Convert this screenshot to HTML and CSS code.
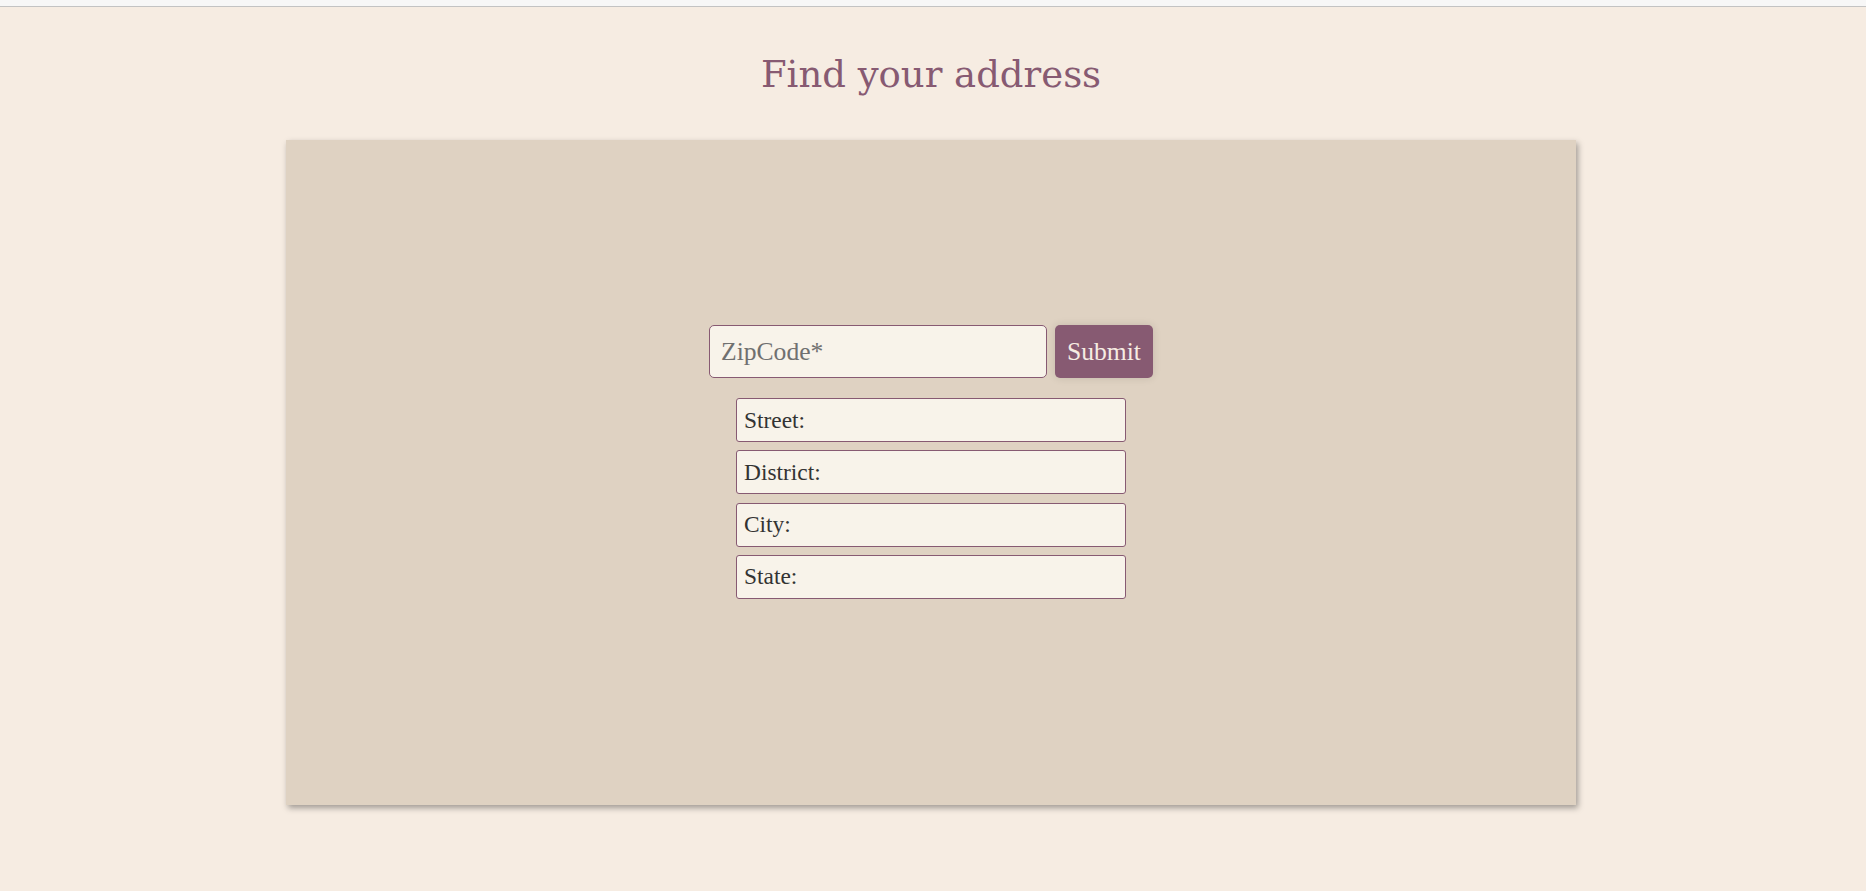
FILE: index.html
```html
<!DOCTYPE html>
<html lang="en">
<head>
<meta charset="utf-8">
<title>Find your address</title>
<link rel="stylesheet" href="styles.css">
</head>
<body>
<div class="topbar"></div>
<main class="page">
  <h1 class="title">Find your address</h1>
  <section class="card">
    <form class="zip-row" onsubmit="return false">
      <input class="zip-input" type="text" placeholder="ZipCode*">
      <button class="submit-btn" type="submit">Submit</button>
    </form>
    <div class="fields">
      <div class="field">Street:</div>
      <div class="field">District:</div>
      <div class="field">City:</div>
      <div class="field">State:</div>
    </div>
  </section>
</main>
</body>
</html>
```
FILE: styles.css
```css
html, body {
  margin: 0;
  padding: 0;
  background: #f6ece2;
}
body {
  font-family: "Liberation Serif", "Times New Roman", serif;
  min-height: 891px;
}
.topbar {
  height: 6px;
  background: #f7f7f7;
  border-bottom: 1px solid #c3c3c3;
}
.page {
  padding-right: 4px;
}
.title {
  margin: 0;
  padding-top: 46px;
  height: 133px;
  box-sizing: border-box;
  text-align: center;
  font-family: "DejaVu Serif", serif;
  font-weight: 400;
  font-size: 37px;
  line-height: 44px;
  color: #875a72;
}
.card {
  width: 1290px;
  height: 665px;
  box-sizing: border-box;
  margin: 0 auto;
  padding-top: 185px;
  background: #dfd2c2;
  box-shadow: 2px 3px 6px rgba(0, 0, 0, 0.35);
  display: flex;
  flex-direction: column;
  align-items: center;
}
.zip-row {
  display: flex;
  gap: 8px;
  margin: 0;
}
.zip-input {
  width: 338px;
  height: 53px;
  box-sizing: border-box;
  border: 1px solid #875a72;
  border-radius: 5px;
  background: #f8f3ea;
  padding: 0 11px;
  font-family: "Liberation Serif", serif;
  font-size: 25.6px;
  color: #333;
  outline: none;
}
.zip-input::placeholder {
  color: #707070;
}
.submit-btn {
  width: 98px;
  height: 53px;
  border: none;
  border-radius: 5px;
  background: #875a72;
  color: #f6ece2;
  font-family: "Liberation Serif", serif;
  font-size: 25.6px;
  padding: 0;
  box-shadow: 0 0 8px rgba(0, 0, 0, 0.12);
  cursor: pointer;
}
.fields {
  margin-top: 20px;
  display: flex;
  flex-direction: column;
  gap: 8.3px;
}
.field {
  width: 390px;
  height: 44px;
  box-sizing: border-box;
  border: 1px solid #875a72;
  border-radius: 3px;
  background: #f8f3ea;
  padding: 0 7px;
  display: flex;
  align-items: center;
  font-size: 23.4px;
  color: #333;
}
```
